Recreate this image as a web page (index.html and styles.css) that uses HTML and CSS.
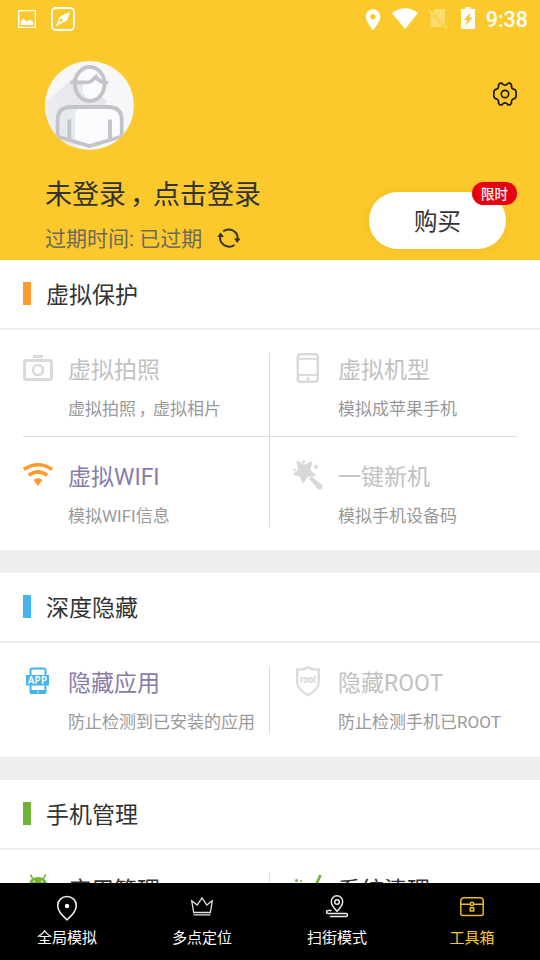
FILE: index.html
```html
<!DOCTYPE html>
<html lang="zh-CN">
<head>
<meta charset="utf-8">
<title>工具箱</title>
<link rel="stylesheet" href="styles.css">
</head>
<body>
<div class="screen">
  <header class="hero">
    <div class="status">
      <svg class="st-image" width="18" height="18" viewBox="0 0 18 18"><path d="M.7.7h16.6v16.6H.7z" fill="none" stroke="#fff" stroke-width="1.3"/><path d="M2.6 15v-4l2.8-2.2 3 2.6 1.8-1 1.700-.4 3.100 1.600V15z" fill="#fff"/></svg>
      <svg class="st-compass" width="24" height="24" viewBox="0 0 24 24"><rect x="1" y="1" width="22" height="22" rx="4" fill="none" stroke="#fff" stroke-width="1.8"/><path fill="#fff" fill-rule="evenodd" d="M19.2 4.8 16 13.500 4.800 19.200 9 9.400zM10.800 11.800a1.500 1.500 0 1 0 .1 2.600 1.500 1.500 0 0 0-.1-2.600z"/></svg>
      <span class="spring"></span>
      <svg class="st-pin" width="16" height="22" viewBox="0 0 16 22"><path fill="#fff" fill-rule="evenodd" d="M8 .3a7.3 7.3 0 0 1 7.3 7.3C15.300 13 8 21.300 8 21.300S.7 13 .7 7.600A7.300 7.300 0 0 1 8 .3zm0 4.700a2.700 2.700 0 1 0 0 5.400 2.700 2.700 0 0 0 0-5.400z"/></svg>
      <svg class="st-wifi" width="26" height="21" viewBox="0 0 26 21"><path fill="#fff" d="M0 5C7.500-1.300 18.500-1.300 26 5L13 21z"/></svg>
      <svg class="st-sim" width="20" height="21" viewBox="0 0 20 21"><path fill="#fff" opacity=".33" d="M7.500 1H17v15L4.500 4zM2.500 5.500 15 19H2.500z"/><path d="M.7 2 19 20.300" stroke="#fff" stroke-width="1.500" opacity=".38"/></svg>
      <svg class="st-battery" width="14" height="22" viewBox="0 0 14 22"><path fill="#fff" fill-rule="evenodd" d="M4.500 0h5v2H14v20H0V2h4.500zM9.500 5 3 13h3.200L4.500 19l7-8.500H8.200z"/></svg>
      <span class="clock">9:38</span>
    </div>
    <svg class="avatar" width="90" height="90" viewBox="0 0 90 90">
      <defs>
        <clipPath id="disc"><circle cx="44.500" cy="44.500" r="44.500"/></clipPath>
        <linearGradient id="shade" x1="1" y1="0" x2="0" y2="1"><stop offset="0" stop-color="#e2e3e8"/><stop offset="1" stop-color="#f0f1f5"/></linearGradient>
      </defs>
      <g clip-path="url(#disc)">
        <rect width="90" height="90" fill="#f7f7f8"/>
        <path d="M30 15 0 42v48h30l32-50z" fill="url(#shade)"/>
        <ellipse cx="44.700" cy="23" rx="14.800" ry="17" fill="#fbfcfd"/>
        <path d="M30 22h9c-3 6 0 14 7 18-10 2-16-6-16-18z" fill="#e6e9f0"/>
        <path d="M13 78V57q0-11 13-11h38q13 0 13 11v21l-32 8z" fill="#fbfcfd"/>
        <path d="M13 78V57q0-11 13-11h9q-5 3-5 12v23z" fill="#e6e9f0"/>
        <g fill="none" stroke="#c2c4ca" stroke-width="3.800">
          <ellipse cx="44.700" cy="23" rx="14.800" ry="17"/>
          <path d="M27 21.300h16c4 0 5-3 8-5.500 2 3.500 5 5.500 10.500 5.500" stroke-linecap="round"/>
          <path d="M12.600 80V59q0-13 14-13h36.600q13.500 0 13.500 13v21M24.300 58.500v21M65 58.500v21"/>
          <path d="M9 74.500l35.500 10.500L80 74.500"/>
        </g>
      </g>
    </svg>
    <svg class="gear" width="24" height="24" viewBox="0 0 24 24" fill="none" stroke="#1d1a08" stroke-width="1.700" stroke-linejoin="round"><path d="M6.800 1.200Q9.400.7 10 2.400q2 1.600 4 0Q14.600.7 17.200 1.200l1.300 1.600q-.7 3.400 2 4.400 2.600.4 2.700 2.800v4q-.3 2.300-2.700 2.800-2.700 1-2 4.400l-1.300 1.600q-2.600.5-3.200-1.200-2-1.600-4 0-.6 1.700-3.200 1.200l-1.300-1.600q.7-3.400-2-4.400Q1 16.300.8 14v-4q.2-2.400 2.700-2.800 2.700-1 2-4.400z"/><circle cx="12" cy="12" r="3.700"/></svg>
    <div class="account">
      <div class="name">未登录<span class="comma">，</span>点击登录</div>
      <div class="expiry"><span>过期时间: 已过期</span>
        <svg width="24" height="20" viewBox="0 0 24 20"><g fill="none" stroke="#35321f" stroke-width="2"><path d="M6.200 3.200A9 8.500 0 0 1 20.500 11"/><path d="M17.500 17A9 8.500 0 0 1 3.500 8"/></g><path fill="#35321f" d="M17 10.500h6.500L20.200 15zM.3 9 3.500 4.500 7 9z"/></svg>
      </div>
    </div>
    <div class="buy">购买<span class="badge">限时</span></div>
  </header>

  <main>
    <section>
      <h2><i class="bar orange"></i><span>虚拟保护</span></h2>
      <div class="grid">
        <div class="cell upper">
          <svg width="30" height="34" viewBox="0 0 30 34"><rect x="1.500" y="7.500" width="27" height="19" rx="2" fill="none" stroke="#dadada" stroke-width="3"/><path d="M10 2h10v3H10z" fill="#dadada"/><circle cx="15" cy="17" r="5" fill="none" stroke="#dadada" stroke-width="2.600"/></svg>
          <div><h3 class="off">虚拟拍照</h3><p>虚拟拍照<span class="comma">，</span>虚拟相片</p></div>
        </div>
        <div class="cell upper">
          <svg width="30" height="34" viewBox="0 0 30 34"><rect x="4.800" y="1.300" width="20" height="27.500" rx="2.500" fill="none" stroke="#dadada" stroke-width="2.500"/><path d="M5 5.800h20M5 22h20" stroke="#dadada" stroke-width="2"/><circle cx="15" cy="25.700" r="1.700" fill="#dadada"/></svg>
          <div><h3 class="off">虚拟机型</h3><p>模拟成苹果手机</p></div>
        </div>
        <div class="cell">
          <svg width="30" height="34" viewBox="0 0 30 34"><g fill="none" stroke="#ff9b2d" stroke-width="3.600"><path d="M.8 9.500q14.200-9.500 28.400 0"/><path d="M5.800 15.200q9.200-6.800 18.400 0"/></g><path fill="#ff9b2d" d="M10.500 20q4.500-3.500 9 0L15 26z"/></svg>
          <div><h3 class="on">虚拟WIFI</h3><p>模拟WIFI信息</p></div>
        </div>
        <div class="cell">
          <svg width="30" height="34" viewBox="0 0 30 34"><g fill="#d8d8d8"><path stroke="#d8d8d8" stroke-width="1.600" stroke-linejoin="round" d="M4.300 1.800 11.300 5.600 18.500 2 16.500 9.800 22 15.800 14.400 16 10 22.500 7.500 15.600 1 14.500 6.200 9.500z"/><path stroke="#d8d8d8" stroke-linejoin="round" d="M16.500 18.800 18.800 17 29 25.600Q29.800 28.500 27 29.300Q26 29.300 25.300 28.800z"/><circle cx="10.700" cy="1.900" r="1.600"/><circle cx="23" cy="6.800" r="2"/><circle cx="1.500" cy="9.700" r="1.300"/></g></svg>
          <div><h3 class="off">一键新机</h3><p>模拟手机设备码</p></div>
        </div>
      </div>
    </section>

    <section>
      <h2><i class="bar blue"></i><span>深度隐藏</span></h2>
      <div class="grid">
        <div class="cell">
          <svg width="30" height="34" viewBox="0 0 30 34"><rect x="7.500" y="2.500" width="15" height="24.500" rx="1.500" fill="none" stroke="#45b4ec" stroke-width="2"/><path fill="#45b4ec" d="M3 9h23v10.500H3zM7 24h16v3.500H7z"/><circle cx="15" cy="25.700" r=".8" fill="#fff"/><text class="app-mark" x="14.500" y="18" text-anchor="middle">APP</text></svg>
          <div><h3 class="on">隐藏应用</h3><p>防止检测到已安装的应用</p></div>
        </div>
        <div class="cell">
          <svg width="30" height="34" viewBox="0 0 30 34"><path fill="none" stroke="#dadada" stroke-width="2.200" d="M15 1.300Q10 4.500 4.200 3.300V17q.7 6.500 10.800 12.200Q25.100 23.500 25.800 17V3.300Q20 4.500 15 1.300z"/><text class="root-mark" x="15" y="17.200" text-anchor="middle" textLength="16" lengthAdjust="spacingAndGlyphs">root</text></svg>
          <div><h3 class="off">隐藏ROOT</h3><p>防止检测手机已ROOT</p></div>
        </div>
      </div>
    </section>

    <section>
      <h2><i class="bar green"></i><span>手机管理</span></h2>
      <div class="grid">
        <div class="cell">
          <svg width="30" height="34" viewBox="0 0 30 34"><path fill="#72b336" d="M6 11Q7 4 15 4t9 7v12H6z"/><path d="m7.300 1.500 2.500 4m13-4-2.500 4" stroke="#72b336" stroke-width="1.500"/><circle cx="11" cy="8.300" r=".9" fill="#fff"/><circle cx="19" cy="8.300" r=".9" fill="#fff"/></svg>
          <h3>应用管理</h3>
        </div>
        <div class="cell">
          <svg width="30" height="34" viewBox="0 0 30 34"><path d="M27.500 2 22 14" stroke="#72b336" stroke-width="2.800"/><circle cx="3.500" cy="7.500" r="1.500" fill="#72b336"/><circle cx="8" cy="8" r="1" fill="#72b336"/></svg>
          <h3>系统清理</h3>
        </div>
      </div>
    </section>
  </main>

  <nav>
    <div class="tab">
      <svg width="26" height="26" viewBox="0 0 26 26" fill="none" stroke="#eee" stroke-width="1.600"><path d="M13 24.800Q3.700 17 3.700 10.500A9.300 9 0 0 1 22.300 10.500Q22.300 17 13 24.800z"/><circle cx="13" cy="11" r="2.200" fill="#fff" stroke="none"/></svg>
      <span>全局模拟</span>
    </div>
    <div class="tab">
      <svg width="26" height="26" viewBox="0 0 26 26" fill="none" stroke="#e2e2e2" stroke-width="1.300"><path d="M4.700 17.500 2.700 5.800l5.500 4.200L13 3l4.800 7 5.500-4.200-2 11.700zM4.500 19.800h17"/></svg>
      <span>多点定位</span>
    </div>
    <div class="tab">
      <svg width="26" height="26" viewBox="0 0 26 26" fill="none" stroke="#eee" stroke-width="1.500"><path d="M13 16.300Q7.300 10.500 7.300 6.500a5.700 5.700 0 0 1 11.400 0Q18.700 10.500 13 16.300z"/><circle cx="13" cy="7" r="2.300"/><path stroke-linecap="round" d="M7 15.500H4q-1.500 0-1.500 1.500T4 18.500h18q1.500 0 1.500 1.500T22 21.500H6.500"/></svg>
      <span>扫街模式</span>
    </div>
    <div class="tab active">
      <svg width="26" height="26" viewBox="0 0 26 26" fill="none" stroke="#eabd18" stroke-width="1.500"><path d="M1.800 18.500V6q0-3.200 3.500-3.200h15.400q3.500 0 3.500 3.200v12.500q0 2-2 2H3.800q-2 0-2-2zM2 9.300h9.500m3 0H24M11.300 12.800h3.400v3.200h-3.400z"/><circle cx="13" cy="9" r="1.700"/></svg>
      <span>工具箱</span>
    </div>
  </nav>
</div>
</body>
</html>
```
FILE: styles.css
```css
* { box-sizing: border-box; }
body, h2, h3, p { margin: 0; font-weight: 400; }
body { font-family: Roboto, "Noto Sans CJK SC", sans-serif; background: #eee; }
svg { display: block; flex: none; }

.screen { height: 960px; display: flex; flex-direction: column; overflow: hidden; }

.hero { position: relative; flex: none; height: 260px; background: #fbc92c; }
.status { display: flex; align-items: flex-start; height: 61px; padding: 7px 12px 0 18px; }
.spring { flex: 1; }
.st-image { margin-top: 3px; }
.st-compass { margin-left: 15px; }
.st-pin { margin: 2px 11px 0 0; }
.st-wifi { margin: 1px 10px 0 0; }
.st-sim { margin: 1px 13px 0 0; }
.st-battery { margin-right: 11px; }
.clock { color: #fff; font-size: 21.5px; font-weight: 500; line-height: 26px; }

.avatar { margin-left: 45px; }
.gear { position: absolute; left: 493px; top: 82px; }

.account { padding: 27px 0 0 45px; color: #333; }
.name { font-size: 27px; line-height: 34px; }
.expiry { display: flex; align-items: center; gap: 15px; margin-top: 13px; font-size: 21px; line-height: 28px; color: #6e6a5c; }
.expiry svg { margin-top: -2px; }
.comma { display: inline-block; width: 1em; text-indent: .15em; white-space: nowrap; }

.buy { position: absolute; left: 369px; top: 192px; width: 137px; height: 57px; border-radius: 29px; background: #fff; color: #333; font-size: 23.500px; line-height: 61px; text-align: center; box-shadow: 0 0 8px rgba(225, 155, 20, .3); }
.badge { position: absolute; right: -11px; top: -10px; width: 45px; height: 23px; border-radius: 12px; background: #e60012; color: #fff; font-size: 13.500px; font-weight: 500; line-height: 24px; }

main { flex: 1; min-height: 0; overflow: hidden; display: flex; flex-direction: column; gap: 23px; }
section { flex: none; background: #fff; }
h2 { display: flex; align-items: center; gap: 15px; height: 70px; padding: 0 23px; border-bottom: 2px solid #eee; font-size: 23px; color: #333; }
h2 span { margin-top: -2px; }
.bar { width: 8px; height: 23px; margin-top: -2px; }
.orange { background: #ff9b2d; }
.blue { background: #45b4ec; }
.green { background: #72b336; }

.grid { display: grid; grid-template-columns: 247px 247px; padding: 23px; }
.cell { display: flex; gap: 15px; height: 68px; }
.cell:nth-child(odd) { border-right: 1px solid #ddd; }
.cell:nth-child(even) { padding-left: 23px; }
.upper { height: 84px; border-bottom: 1px solid #ddd; }
.upper ~ .cell:not(.upper) { height: 90px; padding-top: 23px; }
.cell h3 { padding-top: 1px; font-size: 23px; line-height: 34px; color: #333; white-space: nowrap; }
.cell p { margin-top: 9px; font-size: 17px; line-height: 24px; color: #999; white-space: nowrap; }
.cell h3.off { color: #c1c1c1; }
.cell h3.on { color: #877ca9; }
.app-mark { font: 600 9.800px "Noto Sans", sans-serif; letter-spacing: .3px; fill: #fff; }
.root-mark { font: 700 11px "Liberation Sans", sans-serif; fill: #d2d2d2; }

nav { flex: none; display: grid; grid-template-columns: repeat(4, 1fr); height: 77px; background: #000; color: #fff; }
.tab { display: flex; flex-direction: column; align-items: center; padding: 12px 1px 0 0; font-size: 15px; line-height: 22px; }
.tab span { margin-top: 6px; }
.active { color: #fbc92c; }
```
